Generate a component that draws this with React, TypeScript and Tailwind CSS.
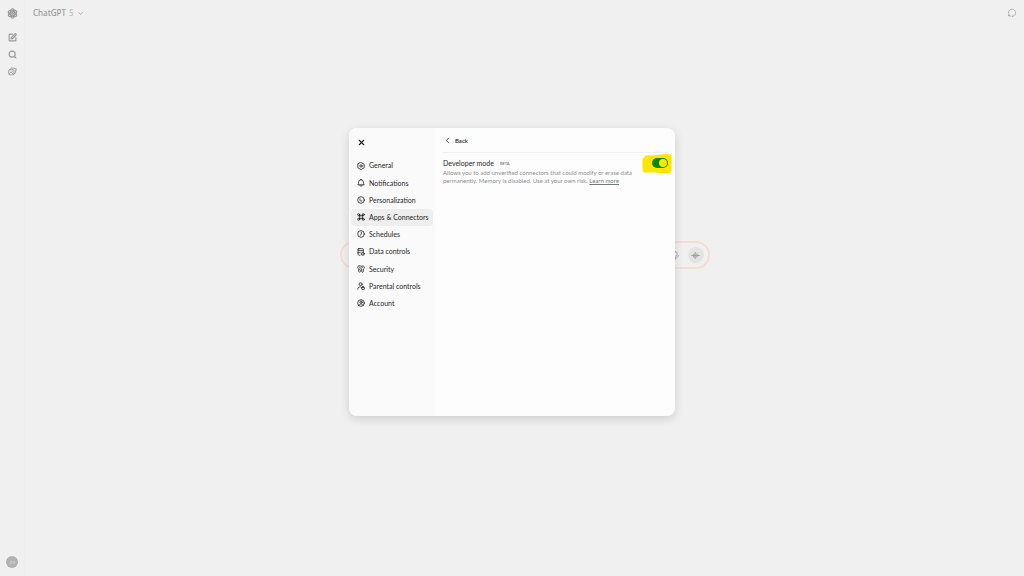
import type { ReactNode } from "react";
import { ChevronDown, ChevronLeft, Search, SquarePen, X } from "lucide-react";

function Icon({ children, className = "size-[9px]" }: { children: ReactNode; className?: string }) {
  return (
    <svg
      viewBox="0 0 24 24"
      fill="none"
      stroke="currentColor"
      strokeWidth="2.4"
      strokeLinecap="round"
      strokeLinejoin="round"
      aria-hidden="true"
      className={`shrink-0 ${className}`}
    >
      {children}
    </svg>
  );
}

const menu = [
  {
    label: "General",
    icon: (
      <>
        <path d="M12 1.500 21.500 6.500V17.500L12 22.500 2.500 17.500V6.500Z" />
        <circle cx="12" cy="12" r="3.500" />
      </>
    ),
  },
  {
    label: "Notifications",
    icon: (
      <>
        <path d="M12 2a7 7 0 0 0-7 7c0 4.500-1.500 6.500-2.500 8.500h19C20.500 15.500 19 13.500 19 9a7 7 0 0 0-7-7Z" />
        <path d="M8.500 18c.5 2.500 1.800 4 3.500 4s3-1.500 3.500-4" />
      </>
    ),
  },
  {
    label: "Personalization",
    icon: (
      <>
        <circle cx="12" cy="12" r="10" />
        <path d="M9 8v4c0 2.500 2 3.500 6 3" />
      </>
    ),
  },
  {
    label: "Apps & Connectors",
    icon: (
      <>
        <circle cx="5" cy="5" r="3" />
        <circle cx="19" cy="5" r="3" />
        <circle cx="5" cy="19" r="3" />
        <circle cx="19" cy="19" r="3" />
        <path d="M8 5.500v13M16 5.500v13M5.500 8h13M5.500 16h13" />
      </>
    ),
  },
  {
    label: "Schedules",
    icon: (
      <>
        <circle cx="12" cy="12" r="10" />
        <path d="M13 7v5l-3 4" />
      </>
    ),
  },
  {
    label: "Data controls",
    icon: (
      <>
        <rect x="3" y="2" width="16" height="6" rx="2.500" />
        <path d="M3 6v13c0 1.500 2 3 6 3M19 6v5M3 14h7" />
        <circle cx="17.500" cy="17.500" r="4.500" />
        <path d="M17.500 17v1" />
      </>
    ),
  },
  {
    label: "Security",
    icon: (
      <>
        <path d="M11 3C8 1 2 2 2 7c0 3 1.500 4 3 5v7l3 3 2-2-1.500-2L10 16.500 8.500 15v-3" />
        <path d="M13 4c4-3 9-1 9 3.500 0 3-1.500 4-3 5V20l-2.500 2-2.500-2v-7.500c-2-1-3-3-2.500-5" />
        <path d="M7 6.500v.5M16.500 6.500v.5" />
      </>
    ),
  },
  {
    label: "Parental controls",
    icon: (
      <>
        <circle cx="11" cy="6.500" r="4.500" />
        <path d="M2 21.500c.5-4 3-7 8-7" />
        <rect x="14" y="16" width="8" height="6" rx="1" />
        <path d="M16 16v-1.500a2 2 0 0 1 4 0V16" />
      </>
    ),
  },
  {
    label: "Account",
    icon: (
      <>
        <circle cx="12" cy="12" r="10" />
        <circle cx="12" cy="9.500" r="3.500" />
        <path d="M5.500 19c1.500-3 4-4 6.500-4s5 1 6.500 4" />
      </>
    ),
  },
];

function Rail() {
  return (
    <aside className="flex w-[25px] flex-col items-center border-r border-[#ededed] pt-2 pb-2 text-[#999]">
      <a href="#" aria-label="Home">
        <Icon className="size-[11px]">
          <ellipse cx="12" cy="12" rx="5" ry="10" />
          <ellipse cx="12" cy="12" rx="5" ry="10" transform="rotate(60 12 12)" />
          <ellipse cx="12" cy="12" rx="5" ry="10" transform="rotate(120 12 12)" />
          <circle cx="12" cy="12" r="2" />
        </Icon>
      </a>
      <nav className="mt-3.5 flex flex-col gap-2">
        <button type="button" aria-label="New chat">
          <SquarePen className="size-[9px]" strokeWidth={3} />
        </button>
        <button type="button" aria-label="Search chats">
          <Search className="size-[9px]" strokeWidth={3} />
        </button>
        <button type="button" aria-label="Library">
          <Icon>
            <path d="M7 6 9 2l13 3-3 12-3 1" />
            <rect x="2" y="7" width="14" height="14" rx="3" />
            <path d="m3 18 5-5 7 7M11 11h1" />
          </Icon>
        </button>
      </nav>
      <button
        type="button"
        aria-label="Profile"
        className="mt-auto flex size-3 items-center justify-center rounded-full bg-[#b0b2b3] text-[#d5d5d5]"
      >
        <Icon className="size-[7px]">
          <path d="m4 8 6 8M10 8l-6 8M14 8l3 4 3-4M17 12v4" />
        </Icon>
      </button>
    </aside>
  );
}

function Composer() {
  return (
    <div className="mx-auto mt-[221px] flex h-7 w-[370px] items-center justify-end gap-2 rounded-full border-2 border-[#f5ddd4] pr-1 text-[#a5a5a5]">
      <button type="button" aria-label="Dictate">
        <Icon>
          <rect x="8" y="2" width="8" height="12" rx="4" />
          <path d="M4 12c1 8 15 8 16 0M12 18v4" />
        </Icon>
      </button>
      <button
        type="button"
        aria-label="Voice mode"
        className="flex size-4 items-center justify-center rounded-full bg-[#e3e3e3] text-[#a0a0a0]"
      >
        <Icon>
          <path strokeWidth="3" d="M2 12h20M7 9v6M11 4v16M16 8v8" />
        </Icon>
      </button>
    </div>
  );
}

function SettingsDialog() {
  return (
    <div
      role="dialog"
      aria-label="Settings"
      className="flex h-72 w-[326px] overflow-hidden rounded-lg bg-[#fdfdfd] shadow-[0_3px_10px_rgba(0,0,0,0.14)]"
    >
      <div className="w-[86px] shrink-0 bg-[#fafafa] px-0.5 pt-2.5">
        <button type="button" aria-label="Close" className="ml-1.5 flex size-[9px] items-center justify-center">
          <X className="size-[9px]" strokeWidth={3} />
        </button>
        <nav className="mt-2.5 grid h-[155px] grid-rows-9">
          {menu.map((item) => (
            <button
              key={item.label}
              type="button"
              className={`flex items-center gap-1 rounded pr-0.5 pl-1.5 text-left text-[7px] whitespace-nowrap ${
                item.label === "Apps & Connectors" ? "bg-[#eeeeee]" : ""
              }`}
            >
              <Icon className="size-2">{item.icon}</Icon>
              {item.label}
            </button>
          ))}
        </nav>
      </div>

      <section className="flex-1">
        <header className="mx-2 flex h-[25px] items-center border-b border-[#f0f0f0]">
          <button type="button" className="flex items-center gap-[3px] text-[6px] font-semibold">
            <ChevronLeft className="size-[9px]" strokeWidth={2} />
            Back
          </button>
        </header>
        <div className="flex items-start justify-between pt-px pr-[3px] pl-2">
          <div className="pt-1">
            <div className="flex h-[11px] items-center gap-1.5">
              <label htmlFor="developer-mode" className="text-[7px]">
                Developer mode
              </label>
              <span className="text-[4px] text-[#555]">BETA</span>
            </div>
            <p className="w-[196px] text-[6px] leading-[8px] text-[#8f8f8f]">
              Allows you to add unverified connectors that could modify or erase data permanently. Memory is disabled.
              Use at your own risk.{" "}
              <a href="#" className="inline-block text-[#777] underline">
                Learn more
              </a>
            </p>
          </div>
          {/* highlighter stroke behind the toggle */}
          <div className="relative flex h-5 w-[30px] shrink-0 items-center justify-end pr-1 pb-0.5">
            <svg viewBox="0 0 30 20" aria-hidden="true" className="absolute inset-0 size-full">
              <path
                fill="#ffe600"
                d="M3 2.500Q3 1.500 5 1.500L13 1.200 22 .3 28 .2Q29.500.3 29.500 2V17Q29.500 19 27 19.200L19 19.500 13 18.500 3 18.500Q.8 18.500.6 17L.4 6Q.4 4 2 4Z"
              />
            </svg>
            <input
              id="developer-mode"
              type="checkbox"
              role="switch"
              defaultChecked
              className="relative h-[10px] w-4 appearance-none rounded-full bg-[#078a00] after:absolute after:top-px after:right-px after:size-2 after:rounded-full after:bg-[#ffe600] after:content-['']"
            />
          </div>
        </div>
      </section>
    </div>
  );
}

export default function App() {
  return (
    <div className="relative flex min-h-screen bg-[#f0f0f0] font-['Lato','Open_Sans',sans-serif] text-[#1f1f1f]">
      <Rail />
      <main className="flex-1">
        <header className="flex h-5 items-end justify-between px-2">
          <button
            type="button"
            className="flex items-center gap-[3px] font-['Noto_Sans',sans-serif] text-[8px] leading-[14px] font-medium text-[#999]"
          >
            ChatGPT <span className="text-[#c0c0c0]">5</span>
            <ChevronDown className="size-[7px] text-[#a5a5a5]" strokeWidth={3} />
          </button>
          <button type="button" aria-label="Temporary chat" className="pb-[3px] text-[#999]">
            <Icon>
              <path strokeDasharray="5 4" d="M4 20.500 5 17a9.500 9.500 0 1 1 3 3.500Z" />
            </Icon>
          </button>
        </header>
        <Composer />
      </main>
      <div className="absolute inset-0 flex items-start justify-center pt-32">
        <SettingsDialog />
      </div>
    </div>
  );
}
